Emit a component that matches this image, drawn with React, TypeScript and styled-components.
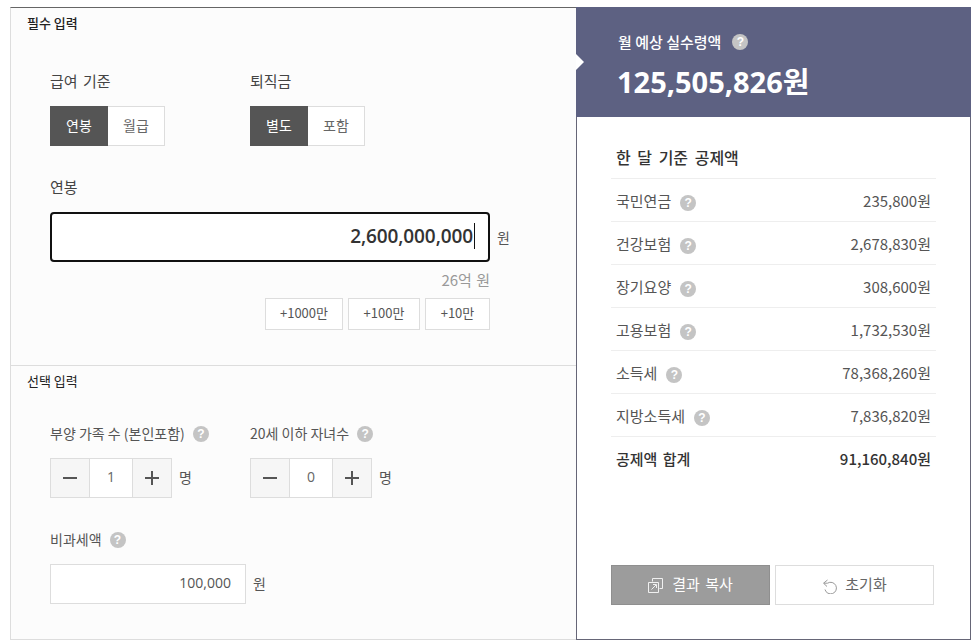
import styled, { createGlobalStyle } from "styled-components";

const deductions = [
  { name: "국민연금", amount: "235,800원" },
  { name: "건강보험", amount: "2,678,830원" },
  { name: "장기요양", amount: "308,600원" },
  { name: "고용보험", amount: "1,732,530원" },
  { name: "소득세", amount: "78,368,260원" },
  { name: "지방소득세", amount: "7,836,820원" },
];

export default function App() {
  return (
    <>
      <GlobalStyle />
      <Page>
        <InputPanel>
          <RequiredSection>
            <SectionTitle $strong>필수 입력</SectionTitle>
            <ToggleRow>
              <ToggleField>
                <Label>급여 기준</Label>
                <Toggle>
                  <ToggleButton $active>연봉</ToggleButton>
                  <ToggleButton>월급</ToggleButton>
                </Toggle>
              </ToggleField>
              <ToggleField>
                <Label>퇴직금</Label>
                <Toggle>
                  <ToggleButton $active>별도</ToggleButton>
                  <ToggleButton>포함</ToggleButton>
                </Toggle>
              </ToggleField>
            </ToggleRow>
            <SalaryLabel>연봉</SalaryLabel>
            <SalaryRow>
              <SalaryInput>
                2,600,000,000
                <Caret />
              </SalaryInput>
              <Unit>원</Unit>
            </SalaryRow>
            <Hint>26억 원</Hint>
            <QuickRow>
              <QuickButton $width={78}>+1000만</QuickButton>
              <QuickButton $width={72}>+100만</QuickButton>
              <QuickButton $width={65}>+10만</QuickButton>
            </QuickRow>
          </RequiredSection>
          <OptionalSection>
            <SectionTitle>선택 입력</SectionTitle>
            <StepperRow>
              <ToggleField>
                <SmallLabel>
                  부양 가족 수 (본인포함) <HelpDot>?</HelpDot>
                </SmallLabel>
                <StepperLine>
                  <Stepper value="1" />
                  <LineUnit>명</LineUnit>
                </StepperLine>
              </ToggleField>
              <ToggleField>
                <SmallLabel>
                  20세 이하 자녀수 <HelpDot>?</HelpDot>
                </SmallLabel>
                <StepperLine>
                  <Stepper value="0" />
                  <LineUnit>명</LineUnit>
                </StepperLine>
              </ToggleField>
            </StepperRow>
            <ExemptLabel>
              비과세액 <HelpDot>?</HelpDot>
            </ExemptLabel>
            <StepperLine>
              <ExemptInput>100,000</ExemptInput>
              <LineUnit>원</LineUnit>
            </StepperLine>
          </OptionalSection>
        </InputPanel>
        <ResultPanel>
          <ResultHeader>
            <ResultLabel>
              월 예상 실수령액 <HelpDot>?</HelpDot>
            </ResultLabel>
            <ResultAmount>125,505,826원</ResultAmount>
          </ResultHeader>
          <ResultBody>
            <BodyTitle>한 달 기준 공제액</BodyTitle>
            <ul>
              {deductions.map((item) => (
                <Row key={item.name}>
                  <RowName>
                    {item.name} <HelpDot>?</HelpDot>
                  </RowName>
                  <span>{item.amount}</span>
                </Row>
              ))}
              <TotalRow>
                <span>공제액 합계</span>
                <span>91,160,840원</span>
              </TotalRow>
            </ul>
            <Actions>
              <CopyButton>
                <svg width="15" height="15" viewBox="0 0 15 15" fill="none" stroke="#f0f0f0">
                  <path d="M4.5 3.5V0.5H14.5V10.5H11.5M0.5 4.5H10.5V14.5H0.5ZM3.5 11.5L8 7M5 6.5H8.5V10" />
                </svg>
                결과 복사
              </CopyButton>
              <ResetButton>
                <svg width="16" height="16" viewBox="0 0 16 16" fill="none" stroke="#999999">
                  <path d="M2 5.2H5.5A5.8 5.8 0 1 1 3 11.5M5.5 2L1.5 5.2L5 8.5" />
                </svg>
                초기화
              </ResetButton>
            </Actions>
          </ResultBody>
        </ResultPanel>
      </Page>
    </>
  );
}

function Stepper({ value }: { value: string }) {
  return (
    <StepperBox>
      <StepButton>
        <svg width="14" height="14" viewBox="0 0 14 14" stroke="#555555" strokeWidth="2">
          <path d="M0 7h14" />
        </svg>
      </StepButton>
      <StepValue>{value}</StepValue>
      <StepButton>
        <svg width="14" height="14" viewBox="0 0 14 14" stroke="#555555" strokeWidth="2">
          <path d="M0 7h14M7 0v14" />
        </svg>
      </StepButton>
    </StepperBox>
  );
}

const GlobalStyle = createGlobalStyle`
  html, body {
    margin: 0;
    background: #ffffff;
  }

  body {
    font-family: "Noto Sans CJK KR", "Noto Sans", sans-serif;
    color: #555555;
  }

  * {
    box-sizing: border-box;
  }

  ul {
    margin: 0;
    padding: 0;
    list-style: none;
  }
`;

const Page = styled.div`
  display: flex;
  width: 974px;
  height: 640px;
  padding: 7px 3px 0 10px;
`;

const InputPanel = styled.section`
  display: flex;
  flex-direction: column;
  width: 566px;
  background: #fcfcfc;
  border-top: 1px solid #666666;
  border-left: 1px solid #dddddd;
  border-bottom: 1px solid #dddddd;
`;

const RequiredSection = styled.div`
  height: 358px;
  padding: 5px 0 0 39px;
  border-bottom: 1px solid #dddddd;
`;

const OptionalSection = styled.div`
  flex: 1;
  padding: 5px 0 0 39px;
`;

const SectionTitle = styled.h2<{ $strong?: boolean }>`
  margin: 0 0 0 -23px;
  height: 21px;
  font-size: 13px;
  line-height: 20px;
  font-weight: ${(props) => (props.$strong ? 500 : 400)};
  color: #222222;
`;

const ToggleRow = styled.div`
  display: flex;
  margin-top: 36px;
`;

const ToggleField = styled.div`
  width: 200px;
`;

const Label = styled.div`
  height: 22px;
  font-size: 15px;
  line-height: 22px;
  word-spacing: 2px;
  color: #444444;
`;

const Toggle = styled.div`
  display: flex;
  margin-top: 14px;
  height: 40px;
`;

const ToggleButton = styled.button<{ $active?: boolean }>`
  width: ${(props) => (props.$active ? 58 : 57)}px;
  padding: 0 0 3px;
  font: inherit;
  font-size: 14px;
  color: ${(props) => (props.$active ? "#ffffff" : "#666666")};
  background: ${(props) => (props.$active ? "#555555" : "#ffffff")};
  border: 1px solid ${(props) => (props.$active ? "#555555" : "#dddddd")};
  border-left-width: ${(props) => (props.$active ? 1 : 0)}px;
`;

const SalaryLabel = styled(Label)`
  margin-top: 30px;
`;

const SalaryRow = styled.div`
  display: flex;
  align-items: center;
  margin-top: 14px;
`;

const SalaryInput = styled.div`
  display: flex;
  align-items: center;
  justify-content: flex-end;
  width: 440px;
  height: 50px;
  padding: 0 13px 2px 0;
  font-family: "Open Sans", sans-serif;
  font-size: 19px;
  letter-spacing: -0.1px;
  font-weight: 600;
  color: #333333;
  background: #ffffff;
  border: 2px solid #111111;
  border-radius: 4px;
`;

const Caret = styled.span`
  width: 1px;
  height: 26px;
  margin-left: 1px;
  background: #111111;
`;

const Unit = styled.span`
  margin-left: 7px;
  font-size: 14px;
  color: #555555;
`;

const LineUnit = styled(Unit)`
  padding-bottom: 2px;
`;

const Hint = styled.div`
  width: 440px;
  margin-top: 8px;
  height: 20px;
  font-size: 15px;
  line-height: 20px;
  word-spacing: 1px;
  text-align: right;
  color: #999999;
`;

const QuickRow = styled.div`
  display: flex;
  justify-content: flex-end;
  gap: 5px;
  width: 440px;
  margin-top: 8px;
`;

const QuickButton = styled.button<{ $width: number }>`
  width: ${(props) => props.$width}px;
  height: 32px;
  padding: 0 0 4px;
  font: inherit;
  font-size: 13px;
  color: #555555;
  background: #ffffff;
  border: 1px solid #dddddd;
`;

const StepperRow = styled.div`
  display: flex;
  margin-top: 31px;
`;

const HelpDot = styled.span`
  display: inline-flex;
  flex: none;
  align-items: center;
  justify-content: center;
  width: 16px;
  height: 16px;
  margin-top: 2px;
  border-radius: 50%;
  font-family: "Liberation Sans", sans-serif;
  font-size: 12px;
  font-weight: 700;
  color: #ffffff;
  background: #c4c4c4;
`;

const SmallLabel = styled.div`
  display: flex;
  align-items: center;
  gap: 8px;
  height: 20px;
  font-size: 14px;
  color: #555555;
`;

const StepperLine = styled.div`
  display: flex;
  align-items: center;
  margin-top: 15px;
`;

const StepperBox = styled.div`
  display: flex;
  width: 122px;
  height: 40px;
  border: 1px solid #dddddd;
`;

const StepButton = styled.div`
  display: flex;
  align-items: center;
  justify-content: center;
  width: 38px;
  background: #f6f6f6;
`;

const StepValue = styled.div`
  flex: 1;
  font-family: "Open Sans", sans-serif;
  font-size: 14px;
  line-height: 35px;
  text-align: center;
  color: #666666;
  background: #ffffff;
  border-left: 1px solid #dddddd;
  border-right: 1px solid #dddddd;
`;

const ExemptLabel = styled(SmallLabel)`
  margin-top: 31px;
`;

const ExemptInput = styled.div`
  width: 196px;
  height: 40px;
  padding-right: 14px;
  font-family: "Open Sans", sans-serif;
  font-size: 14px;
  line-height: 35px;
  text-align: right;
  color: #555555;
  background: #ffffff;
  border: 1px solid #dddddd;
`;

const ResultPanel = styled.section`
  display: flex;
  flex-direction: column;
  width: 395px;
  background: #ffffff;
  border: 1px solid #666677;
  border-top: 0;
`;

const ResultHeader = styled.header`
  position: relative;
  height: 110px;
  margin: 0 -1px;
  padding: 21px 0 0 42px;
  color: #ffffff;
  background: #5d6182;

  &::before {
    content: "";
    position: absolute;
    left: 0;
    top: 47px;
    border-left: 8px solid #ffffff;
    border-top: 8px solid transparent;
    border-bottom: 8px solid transparent;
  }
`;

const ResultLabel = styled.div`
  display: flex;
  align-items: center;
  gap: 11px;
  height: 26px;
  font-size: 15px;
  font-weight: 500;
`;

const ResultAmount = styled.div`
  margin: 10px 0 0 -1px;
  font-family: "Open Sans", "Noto Sans CJK KR", sans-serif;
  font-size: 29px;
  line-height: 36px;
  font-weight: 700;
`;

const ResultBody = styled.div`
  display: flex;
  flex-direction: column;
  flex: 1;
  padding: 0 34px;
`;

const BodyTitle = styled.div`
  height: 62px;
  padding: 29px 0 0 5px;
  font-size: 16px;
  line-height: 22px;
  word-spacing: 3px;
  font-weight: 500;
  color: #333333;
  border-bottom: 1px solid #eeeeee;
`;

const Row = styled.li`
  display: flex;
  align-items: center;
  justify-content: space-between;
  height: 43px;
  padding: 0 5px 0 5px;
  font-size: 15px;
  color: #555555;
  border-bottom: 1px solid #eeeeee;
`;

const RowName = styled.span`
  display: flex;
  align-items: center;
  gap: 9px;

  ${HelpDot} {
    margin-top: 5px;
  }
`;

const TotalRow = styled(Row)`
  font-weight: 500;
  word-spacing: 2px;
  color: #333333;
  border-bottom: 0;
`;

const Actions = styled.div`
  display: flex;
  gap: 5px;
  margin-top: auto;
  margin-bottom: 34px;
`;

const CopyButton = styled.button`
  display: flex;
  align-items: center;
  justify-content: center;
  gap: 9px;
  width: 159px;
  height: 40px;
  padding: 0 0 3px;
  font: inherit;
  font-size: 15px;
  word-spacing: 2px;
  color: #ffffff;
  background: #9c9c9c;
  border: 1px solid #8f8f8f;

  svg {
    margin-top: 4px;
  }
`;

const ResetButton = styled(CopyButton)`
  gap: 7px;
  color: #666666;
  background: #ffffff;
  border: 1px solid #dddddd;
`;
